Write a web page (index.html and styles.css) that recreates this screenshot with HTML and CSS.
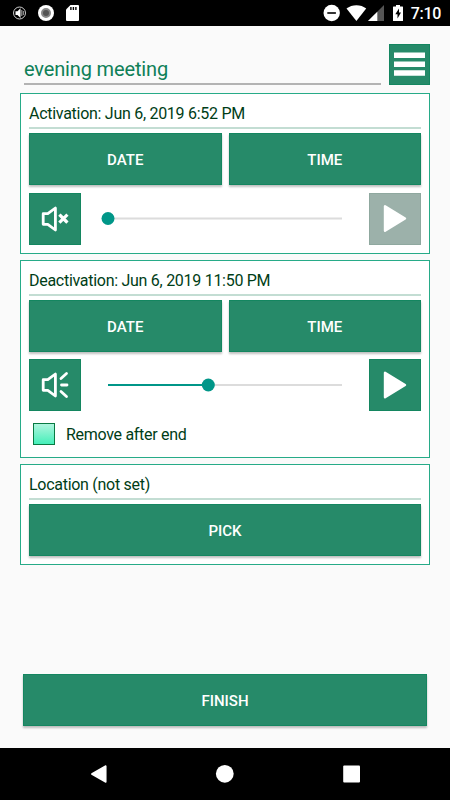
FILE: index.html
```html
<!DOCTYPE html>
<html lang="en">
<head>
    <meta charset="UTF-8">
    <meta name="viewport" content="width=device-width, initial-scale=1.0">
    <title>Edit event</title>
    <link rel="stylesheet" href="styles.css">
</head>
<body>
    <header class="status">
        <svg width="450" height="26" viewBox="0 0 450 26">
            <circle cx="19.5" cy="13" r="6" fill="none" stroke="#ccc" stroke-width="1"/>
            <path d="M15.5 11.3h2l3-3v9.6l-3-3h-2z" fill="#fff"/>
            <path d="M21.8 10v6M23.3 11v4" stroke="#aaa" stroke-width="1"/>
            <circle cx="46" cy="13" r="8" fill="#fff"/>
            <circle cx="46" cy="13" r="4" fill="#555" stroke="#888" stroke-width="2"/>
            <path d="M70.5 5H78a1 1 0 0 1 1 1v14a1 1 0 0 1-1 1H67a1 1 0 0 1-1-1V9.5z" fill="#fff"/>
            <path d="M70.9 7v3M73.4 7v3M75.9 7v3" stroke="#000" stroke-width="1.4"/>
            <circle cx="331.7" cy="13" r="8.2" fill="#fff"/>
            <path d="M327.3 13h8.6" stroke="#000" stroke-width="1.6"/>
            <path d="M346.5 8.5C352 4 361 4 366.2 8.5L356.4 21z" fill="#fff"/>
            <path d="M384 5v16h-16z" fill="#555"/>
            <path d="M377.3 11.7V21H368z" fill="#fff"/>
            <path d="M393.5 6.5H396V5h4v1.5h2.5a.5.5 0 0 1 .5.5v13.5a.5.5 0 0 1-.5.5h-9a.5.5 0 0 1-.5-.5V7a.5.5 0 0 1 .5-.5z" fill="#fff"/>
            <path d="M399 8.5l-3.7 5.7h2.2v4.3l3.5-6h-2z" fill="#000"/>
        </svg>
        <span class="clock">7:10</span>
    </header>

    <main class="content">
        <div class="top">
            <input class="name" type="text" value="evening meeting">
            <button class="menu">
                <svg width="41" height="41" viewBox="0 0 41 41">
                    <path d="M5 11.3h31M5 20.2h31M5 29h31" stroke="#fff" stroke-width="5.6"/>
                </svg>
            </button>
        </div>

        <section class="card activation">
            <h2>Activation: Jun 6, 2019 6:52 PM</h2>
            <div class="row">
                <button class="btn">DATE</button>
                <button class="btn">TIME</button>
            </div>
            <div class="sound">
                <button class="icon">
                    <svg width="52" height="52" viewBox="0 0 52 52">
                        <path d="M14.2 20.7h4.6l7.6-5.7v22l-7.6-5.7h-4.6z" fill="none" stroke="#fff" stroke-width="2.8" stroke-linejoin="round"/>
                        <path d="M31.5 22.7l5.8 5.8M37.3 22.7l-5.8 5.8" stroke="#fff" stroke-width="3.2" stroke-linecap="square"/>
                    </svg>
                </button>
                <svg class="slider" width="250" height="52" viewBox="0 0 250 52">
                    <path d="M8 25.5h234" stroke="#dcdcdc" stroke-width="2"/>
                    <circle cx="8" cy="25.5" r="6.5" fill="#009688"/>
                </svg>
                <button class="icon disabled">
                    <svg width="52" height="52" viewBox="0 0 52 52">
                        <path d="M16 13.3v24.5L36 25.5z" fill="#fff" stroke="#fff" stroke-width="2.4" stroke-linejoin="round"/>
                    </svg>
                </button>
            </div>
        </section>

        <section class="card deactivation">
            <h2>Deactivation: Jun 6, 2019 11:50 PM</h2>
            <div class="row">
                <button class="btn">DATE</button>
                <button class="btn">TIME</button>
            </div>
            <div class="sound">
                <button class="icon">
                    <svg width="52" height="52" viewBox="0 0 52 52">
                        <path d="M14.2 20.7h4.6l7.6-5.7v22l-7.6-5.7h-4.6z" fill="none" stroke="#fff" stroke-width="2.8" stroke-linejoin="round"/>
                        <path d="M32 19.5l5.5-5M32.5 26h5.5M32 32.5l5.5 5" stroke="#fff" stroke-width="2.8" stroke-linecap="round"/>
                    </svg>
                </button>
                <svg class="slider" width="250" height="52" viewBox="0 0 250 52">
                    <path d="M108 26h134" stroke="#dcdcdc" stroke-width="2"/>
                    <path d="M8 26h100" stroke="#009688" stroke-width="2"/>
                    <circle cx="108.3" cy="26" r="6.5" fill="#009688"/>
                </svg>
                <button class="icon">
                    <svg width="52" height="52" viewBox="0 0 52 52">
                        <path d="M16 13.8v24.5L36 26z" fill="#fff" stroke="#fff" stroke-width="2.4" stroke-linejoin="round"/>
                    </svg>
                </button>
            </div>
            <div class="check">
                <span class="box"></span>
                <span class="label">Remove after end</span>
            </div>
        </section>

        <section class="card location">
            <h2>Location (not set)</h2>
            <div class="row">
                <button class="btn">PICK</button>
            </div>
        </section>

        <button class="btn finish">FINISH</button>
    </main>

    <nav class="navbar">
        <svg width="450" height="52" viewBox="0 0 450 52">
            <path d="M91.8 26L105.8 18v16z" fill="#fff" stroke="#fff" stroke-width="1.5" stroke-linejoin="round"/>
            <circle cx="224.8" cy="25.8" r="8.9" fill="#fff"/>
            <rect x="343.2" y="17.5" width="16.8" height="17" rx="1" fill="#fff"/>
        </svg>
    </nav>
</body>
</html>
```
FILE: styles.css
```css
* {
    box-sizing: border-box;
}
body {
    margin: 0;
    height: 800px;
    display: flex;
    flex-direction: column;
    background-color: #fafafa;
    font-family: Roboto, sans-serif;
    overflow: hidden;
}
svg {
    display: block;
}
button {
    padding: 0;
    border: none;
    border-radius: 0;
    font-family: inherit;
    background-color: #268a69;
    cursor: pointer;
}
.status {
    position: relative;
    height: 26px;
    background-color: #000;
}
.clock {
    position: absolute;
    right: 9px;
    top: 4px;
    color: #fff;
    font-size: 16px;
    font-weight: 500;
    letter-spacing: -0.3px;
    line-height: 20px;
}
.content {
    flex: 1;
    display: flex;
    flex-direction: column;
    padding: 18px 20px 0;
}
.top {
    display: flex;
    justify-content: space-between;
    height: 41px;
    margin: 0 0 8px 4px;
}
.name {
    width: 357px;
    padding: 11px 0 0;
    border: none;
    border-bottom: 2px solid #b3b3b3;
    background: none;
    color: #0f8058;
    font-family: inherit;
    font-size: 20px;
    letter-spacing: -0.15px;
    outline: none;
}
.menu {
    width: 41px;
    height: 41px;
    border: 1px solid #148660;
}
.menu svg {
    margin: -1px;
}
.card {
    margin-bottom: 6px;
    padding: 0 8px;
    border: 1px solid #27ab88;
    background-color: #fff;
}
.activation {
    height: 161px;
}
.deactivation {
    height: 198px;
}
.location {
    height: 101px;
}
h2 {
    height: 35px;
    margin: 0 0 4px;
    padding-top: 10px;
    border-bottom: 2px solid #c3ddd3;
    color: #003d17;
    font-size: 16px;
    font-weight: 400;
    letter-spacing: -0.28px;
    line-height: 20px;
}
.row {
    display: flex;
    gap: 7px;
    margin-bottom: 7px;
}
.btn {
    flex: 1;
    height: 52px;
    padding-top: 2px;
    border: 1px solid #148660;
    box-shadow: 0 2px 2px rgba(0, 0, 0, 0.25);
    color: #fff;
    font-size: 15px;
    font-weight: 500;
}
.sound {
    display: flex;
    justify-content: space-between;
}
.activation .sound {
    padding-top: 1px;
}
.icon {
    width: 52px;
    height: 52px;
    border: 1px solid #148660;
}
.icon svg {
    margin: -1px;
}
.disabled {
    border-color: #8fa89f;
    background-color: #9cb1aa;
}
.check {
    display: flex;
    align-items: center;
    gap: 11px;
    margin: 12px 0 0 4px;
    color: #003d17;
    font-size: 16px;
    letter-spacing: -0.3px;
    line-height: 22px;
}
.label {
    padding-top: 1px;
    height: 22px;
}
.box {
    width: 22px;
    height: 22px;
    border: 1px solid #087a42;
    background: linear-gradient(#aff5de, #45efb9);
}
.finish {
    flex: none;
    margin: 103px 3px 0;
}
.navbar {
    height: 52px;
    background-color: #000;
}
```
